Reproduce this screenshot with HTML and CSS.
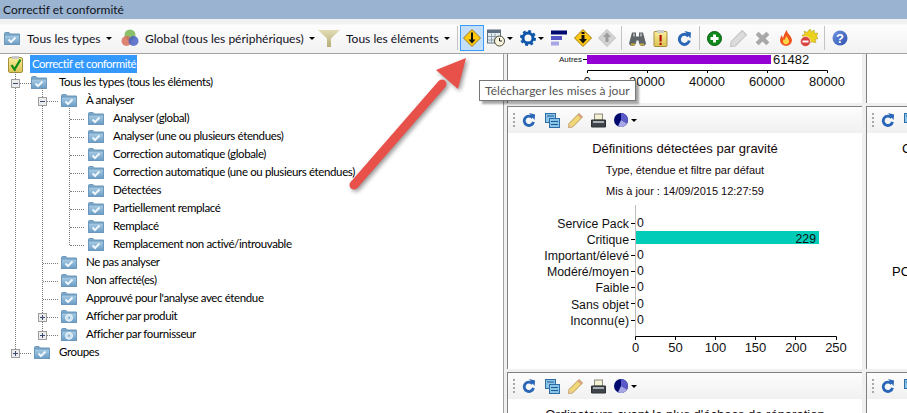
FILE: index.html
```html
<!DOCTYPE html>
<html lang="fr">
<head>
<meta charset="utf-8">
<title>Correctif et conformité</title>
<link rel="stylesheet" href="styles.css">
</head>
<body>
<svg class="defs" width="0" height="0" aria-hidden="true">
  <defs>
    <linearGradient id="gf" x1="0" y1="0" x2="0" y2="1"><stop offset="0" stop-color="#a9cde6"/><stop offset="1" stop-color="#6a9cc4"/></linearGradient>
    <linearGradient id="gb" x1="0" y1="0" x2="1" y2="1"><stop offset="0" stop-color="#6f95e0"/><stop offset="1" stop-color="#2c4fae"/></linearGradient>
    <linearGradient id="gc" x1="0" y1="0" x2="0" y2="1"><stop offset="0" stop-color="#f8ee9c"/><stop offset="1" stop-color="#dcc352"/></linearGradient>
    <linearGradient id="gt" x1="0" y1="0" x2="0" y2="1"><stop offset="0" stop-color="#e2dcb4"/><stop offset="1" stop-color="#b8ad78"/></linearGradient>
    <symbol id="i-folder" viewBox="0 0 16 13">
      <path d="M.5 12.5V1.5q0-1 1-1h3.5l1.500 1.500h8.500q1 0 1 1v9.500z" fill="#7ea9cb" stroke="#6b98bc"/>
      <rect x=".5" y="3" width="15" height="9.500" fill="url(#gf)" stroke="#6b98bc"/>
      <path d="M4.500 7.500l2.500 2.500 4.500-4.500" fill="none" stroke="#eef6fb" stroke-width="2"/>
    </symbol>
    <symbol id="i-folder-disc" viewBox="0 0 16 13">
      <path d="M.5 12.5V1.500q0-1 1-1h3.500l1.500 1.500h8.500q1 0 1 1v9.500z" fill="#7ea9cb" stroke="#6b98bc"/>
      <rect x=".5" y="3" width="15" height="9.500" fill="url(#gf)" stroke="#6b98bc"/>
      <circle cx="8" cy="7.800" r="3.500" fill="#cfe2ef" stroke="#eef6fb"/>
      <circle cx="8" cy="7.800" r="1" fill="#7ea9cb"/>
    </symbol>
    <symbol id="i-root" viewBox="0 0 15 17">
      <rect x=".5" y="1.500" width="14" height="15" rx="1.500" fill="url(#gc)" stroke="#a58f3c"/>
      <rect x="4" y="0" width="7" height="3" fill="#c9c9c9"/>
      <path d="M3.500 9l3 4.500L12.500 3.500" fill="none" stroke="#0a8a12" stroke-width="2.200"/>
    </symbol>
    <symbol id="i-globe" viewBox="0 0 18 18">
      <circle cx="9" cy="6" r="5.500" fill="#8bbf6a"/>
      <circle cx="5.500" cy="12" r="5" fill="#d8705a" fill-opacity=".85"/>
      <circle cx="12.500" cy="12" r="5" fill="#4a62c4" fill-opacity=".85"/>
    </symbol>
    <symbol id="i-funnel" viewBox="0 0 22 17">
      <path d="M0 0h22L13 8.500V17H9V8.500z" fill="url(#gt)"/>
    </symbol>
    <symbol id="i-dl" viewBox="0 0 18 18">
      <path d="M9 .5L17.500 9 9 17.500.5 9z" fill="#ffc812" stroke="#a17b10"/>
      <path d="M8 3.500h2v7h2.500L9 14.500 5.500 10.500H8z" fill="#111"/>
    </symbol>
    <symbol id="i-dl2" viewBox="0 0 18 18">
      <path d="M9 .5L17.500 9 9 17.500.5 9z" fill="#ffc812" stroke="#a17b10"/>
      <path d="M7.500 3h3v2h-3zM7.500 6h3v4h2.500L9 14.500 5 10h2.500z" fill="#111"/>
    </symbol>
    <symbol id="i-ul" viewBox="0 0 18 18">
      <path d="M9 .5L17.500 9 9 17.500.5 9z" fill="#d2d2d2" stroke="#c0c0c0"/>
      <path d="M9 3.500l4 4.500h-2.500v5h-3V8H5z" fill="#9c9c9c"/>
    </symbol>
    <symbol id="i-cal" viewBox="0 0 18 17">
      <rect x=".5" y=".5" width="13" height="13" fill="#e7eef2" stroke="#5e7180"/>
      <rect x=".5" y=".5" width="13" height="3" fill="#5e7180"/>
      <path d="M1 7h12M1 10.500h12M4.500 4v9M8 4v9" stroke="#8ea0ac" fill="none"/>
      <circle cx="12.500" cy="11.500" r="5" fill="#f7f3dd" stroke="#4d4d3c"/>
      <path d="M12.500 8.500v3h2.500" fill="none" stroke="#222"/>
    </symbol>
    <symbol id="i-gear" viewBox="0 0 16 16">
      <circle cx="8" cy="8" r="5" fill="none" stroke="#0f55a8" stroke-width="3"/>
      <circle cx="8" cy="8" r="7" fill="none" stroke="#0f55a8" stroke-width="2" stroke-dasharray="2.900 2.600"/>
    </symbol>
    <symbol id="i-bars" viewBox="0 0 16 15">
      <rect width="16" height="4" fill="#000a6e"/>
      <rect y="5.500" width="11" height="4" fill="#5656c4"/>
      <rect y="11" width="8" height="4" fill="#a6a6e6"/>
    </symbol>
    <symbol id="i-bino" viewBox="0 0 17 16">
      <path d="M3 2h4v4h3V2h4l3 11q-1 3-4 2.500T9.500 10h-2Q7 15 4 15.500T0 13z" fill="#5e6468"/>
      <path d="M2 13h4v2H2zM11 13h4v2h-4z" fill="#c8a83a"/>
      <path d="M4 3h2v3H4zM11 3h2v3h-2z" fill="#a4aaae"/>
    </symbol>
    <symbol id="i-clip" viewBox="0 0 14 17">
      <rect x=".5" y="1.500" width="13" height="15" rx="1" fill="url(#gc)" stroke="#a58f3c"/>
      <rect x="3.500" y="0" width="7" height="3" fill="#cdcdcd"/>
      <path d="M6 5h2.200v6.500H6zM6 12.700h2.200V15H6z" fill="#b3100c"/>
    </symbol>
    <symbol id="i-refresh" viewBox="0 0 14 15">
      <path d="M10.800 5.200A5 5 0 1 0 11.800 9.500" fill="none" stroke="#2a66b8" stroke-width="3"/>
      <path d="M7 0l6.500 1.500L13 7.500z" fill="#2a66b8"/>
    </symbol>
    <symbol id="i-plus" viewBox="0 0 15 15">
      <circle cx="7.500" cy="7.500" r="7" fill="#0d8a1a" stroke="#0a5c12"/>
      <path d="M6 3.500h3V6h2.500v3H9v2.500H6V9H3.500V6H6z" fill="#fff"/>
    </symbol>
    <symbol id="i-pencil" viewBox="0 0 16 16">
      <path d="M11.500.5l4 4L5 15 .5 15.500 1 11z" fill="#dcdcdc" stroke="#c4c4c4"/>
    </symbol>
    <symbol id="i-pencil2" viewBox="0 0 15 15">
      <path d="M11 .5l3.500 3.500L4.500 14 .5 14.500 1 10.500z" fill="#f0d878" stroke="#b89a50"/>
      <path d="M1 10.500l3.500 3.500L.5 14.500z" fill="#e8c8a0"/>
      <path d="M11 .5l3.500 3.500-1.500 1.500-3.500-3.500z" fill="#d8a080"/>
    </symbol>
    <symbol id="i-x" viewBox="0 0 14 14">
      <path d="M2 2l10 10M12 2L2 12" stroke="#a8a8a8" stroke-width="4" fill="none"/>
    </symbol>
    <symbol id="i-flame" viewBox="0 0 13 16">
      <path d="M7 0q1 3 3 5t2.500 5q0 5-6 6-6-1-6-6 0-3 2-5 0 2 1 3 1-4 3.500-8z" fill="#f0541c"/>
      <path d="M7 6q2 3 2.500 5T6.500 14.500Q3.500 14 3.500 11q0-1 1-2 .5 1 1 1 0-2 1.500-4z" fill="#ffd84a"/>
    </symbol>
    <symbol id="i-sun" viewBox="0 0 18 18">
      <path d="M10 0l1.500 3L14 1l.5 3.500L18 4l-1.500 3L18 9.500l-3 1 1 3-4-.5-4 1-4-5-2-3 3-.5L4 2l3 1.500z" fill="#ecd21c" stroke="#a89410" stroke-width=".5"/>
      <circle cx="5.500" cy="12.500" r="5" fill="#d8423c" stroke="#fff" stroke-width=".6"/>
      <rect x="2.500" y="11.500" width="6" height="2" fill="#fff"/>
    </symbol>
    <symbol id="i-stack" viewBox="0 0 15 15">
      <rect x=".5" y=".5" width="10" height="9" fill="#8cc4e8" stroke="#2d6da6"/>
      <rect x="4.500" y="5.500" width="10" height="9" fill="#8cc4e8" stroke="#2d6da6"/>
      <path d="M2 3h7M6 8.500h7M6 11.500h7" stroke="#1d5d96" fill="none"/>
    </symbol>
    <symbol id="i-print" viewBox="0 0 15 14">
      <rect x="3.500" y=".5" width="8" height="6" fill="#f4f0d4" stroke="#8a8a7a"/>
      <path d="M.5 6.500h14v7H.5z" fill="#3e444a" stroke="#2c3034"/>
      <rect x="2" y="7.500" width="11" height="2" fill="#aab0b4"/>
    </symbol>
    <symbol id="i-pie" viewBox="0 0 14 14">
      <circle cx="7" cy="7" r="7" fill="#000a6e"/>
      <path d="M7 7V0a7 7 0 0 1 6 10.500z" fill="#5a5ac8"/>
      <path d="M7 7l6 3.500A7 7 0 0 1 4 13.300z" fill="#a6a6e6"/>
    </symbol>
  </defs>
</svg>

<div class="app">
  <header class="titlebar">Correctif et conformité</header>

  <nav class="toolbar">
    <span class="tool-drop tool-drop-types"><svg class="ic-folder"><use href="#i-folder"/></svg><span class="tool-label">Tous les types</span><i class="caret"></i></span>
    <span class="tool-drop tool-drop-global"><svg class="ic-globe"><use href="#i-globe"/></svg><span class="tool-label">Global (tous les périphériques)</span><i class="caret"></i></span>
    <span class="tool-drop tool-drop-filter"><svg class="ic-funnel"><use href="#i-funnel"/></svg><span class="tool-label">Tous les éléments</span><i class="caret"></i></span>
    <span class="sep"></span>
    <span class="btn btn-active"><svg class="ic18"><use href="#i-dl"/></svg></span>
    <span class="btn btn-menu"><svg class="ic18"><use href="#i-cal"/></svg><i class="caret"></i></span>
    <span class="btn btn-menu"><svg class="ic16"><use href="#i-gear"/></svg><i class="caret"></i></span>
    <span class="btn"><svg class="ic16"><use href="#i-bars"/></svg></span>
    <span class="btn"><svg class="ic18"><use href="#i-dl2"/></svg></span>
    <span class="btn"><svg class="ic18"><use href="#i-ul"/></svg></span>
    <span class="sep"></span>
    <span class="btn"><svg class="ic17"><use href="#i-bino"/></svg></span>
    <span class="btn"><svg class="ic17"><use href="#i-clip"/></svg></span>
    <span class="btn"><svg class="ic15"><use href="#i-refresh"/></svg></span>
    <span class="sep"></span>
    <span class="btn"><svg class="ic15"><use href="#i-plus"/></svg></span>
    <span class="btn"><svg class="ic17"><use href="#i-pencil"/></svg></span>
    <span class="btn"><svg class="ic15"><use href="#i-x"/></svg></span>
    <span class="btn"><svg class="ic16"><use href="#i-flame"/></svg></span>
    <span class="btn"><svg class="ic18"><use href="#i-sun"/></svg></span>
    <span class="sep"></span>
    <span class="btn btn-help"><svg class="ic16" viewBox="0 0 16 16"><circle cx="8" cy="8" r="7.500" fill="url(#gb)"/><text x="8" y="12.500" class="help-mark">?</text></svg></span>
  </nav>

  <main class="main">
    <section class="tree-pane">
      <div class="row row-root"><svg class="ic-root"><use href="#i-root"/></svg><span class="selected">Correctif et conformité</span></div>
      <ul class="tree">
        <li>
          <span class="exp exp-minus"></span>
          <div class="row row-first"><svg class="ic-tree"><use href="#i-folder"/></svg>Tous les types (tous les éléments)</div>
          <ul>
            <li>
              <span class="exp exp-minus"></span>
              <div class="row"><svg class="ic-tree"><use href="#i-folder"/></svg>À analyser</div>
              <ul>
                <li><div class="row"><svg class="ic-tree"><use href="#i-folder"/></svg>Analyser (global)</div></li>
                <li><div class="row"><svg class="ic-tree"><use href="#i-folder"/></svg>Analyser (une ou plusieurs étendues)</div></li>
                <li><div class="row"><svg class="ic-tree"><use href="#i-folder"/></svg>Correction automatique (globale)</div></li>
                <li><div class="row"><svg class="ic-tree"><use href="#i-folder"/></svg>Correction automatique (une ou plusieurs étendues)</div></li>
                <li><div class="row"><svg class="ic-tree"><use href="#i-folder"/></svg>Détectées</div></li>
                <li><div class="row"><svg class="ic-tree"><use href="#i-folder"/></svg>Partiellement remplacé</div></li>
                <li><div class="row"><svg class="ic-tree"><use href="#i-folder"/></svg>Remplacé</div></li>
                <li><div class="row"><svg class="ic-tree"><use href="#i-folder"/></svg>Remplacement non activé/introuvable</div></li>
              </ul>
            </li>
            <li><div class="row"><svg class="ic-tree"><use href="#i-folder"/></svg>Ne pas analyser</div></li>
            <li><div class="row"><svg class="ic-tree"><use href="#i-folder"/></svg>Non affecté(es)</div></li>
            <li><div class="row"><svg class="ic-tree"><use href="#i-folder"/></svg>Approuvé pour l'analyse avec étendue</div></li>
            <li><span class="exp exp-plus"></span><div class="row"><svg class="ic-tree"><use href="#i-folder-disc"/></svg>Afficher par produit</div></li>
            <li><span class="exp exp-plus"></span><div class="row"><svg class="ic-tree"><use href="#i-folder-disc"/></svg>Afficher par fournisseur</div></li>
          </ul>
        </li>
        <li><span class="exp exp-plus"></span><div class="row"><svg class="ic-tree"><use href="#i-folder"/></svg>Groupes</div></li>
      </ul>
    </section>

    <div class="splitter"></div>

    <section class="charts">
      <article class="card card-top">
        <svg class="plot plot-top" viewBox="509 54 354 49">
          <text x="582" y="62" class="t-tiny" text-anchor="end">Autres</text>
          <path class="axis" d="M583 59.500h4"/>
          <rect x="587" y="55" width="184" height="9" fill="#9400d3"/>
          <text x="773" y="64" class="t-axis">61482</text>
          <path class="axis" d="M587.500 73V70.500H827.500V73M647.500 70.500V73M707.500 70.500V73M767.500 70.500V73"/>
          <text x="587" y="86" class="t-axis" text-anchor="middle">0</text>
          <text x="647" y="86" class="t-axis" text-anchor="middle">20000</text>
          <text x="707" y="86" class="t-axis" text-anchor="middle">40000</text>
          <text x="767" y="86" class="t-axis" text-anchor="middle">60000</text>
          <text x="827" y="86" class="t-axis" text-anchor="middle">80000</text>
        </svg>
      </article>
      <article class="card card-top"></article>

      <article class="card">
        <div class="card-bar">
          <i class="grip"></i>
          <svg class="ic14"><use href="#i-refresh"/></svg>
          <svg class="ic15c"><use href="#i-stack"/></svg>
          <svg class="ic15c"><use href="#i-pencil2"/></svg>
          <svg class="ic15c"><use href="#i-print"/></svg>
          <svg class="ic14"><use href="#i-pie"/></svg>
          <i class="caret caret-pie"></i>
        </div>
        <div class="chart-head">
          <h2 class="chart-title">Définitions détectées par gravité</h2>
          <p class="chart-sub">Type, étendue et filtre par défaut</p>
          <p class="chart-sub">Mis à jour : 14/09/2015 12:27:59</p>
        </div>
        <svg class="plot plot-main" viewBox="509 205 354 150">
          <path class="axis-soft" d="M635.500 205V337"/>
          <path class="axis" d="M631 223.500h4M631 239.500h4M631 255.500h4M631 271.500h4M631 287.500h4M631 303.500h4M631 320.500h4"/>
          <g class="t-cat" text-anchor="end">
            <text x="629" y="228">Service Pack</text>
            <text x="629" y="244">Critique</text>
            <text x="629" y="260">Important/élevé</text>
            <text x="629" y="276">Modéré/moyen</text>
            <text x="629" y="292">Faible</text>
            <text x="629" y="308.500">Sans objet</text>
            <text x="629" y="325">Inconnu(e)</text>
          </g>
          <rect x="636" y="231" width="183" height="13" fill="#00ccb8"/>
          <text x="816" y="243" class="t-cat" text-anchor="end">229</text>
          <g class="t-cat">
            <text x="637" y="227">0</text>
            <text x="637" y="259">0</text>
            <text x="637" y="275">0</text>
            <text x="637" y="291">0</text>
            <text x="637" y="308">0</text>
            <text x="637" y="324">0</text>
          </g>
          <path class="axis" d="M635.500 340V336.500H836.500V340M675.500 336.500V340M715.500 336.500V340M755.500 336.500V340M795.500 336.500V340"/>
          <g class="t-axis" text-anchor="middle">
            <text x="635.500" y="352">0</text>
            <text x="675.500" y="352">50</text>
            <text x="715.500" y="352">100</text>
            <text x="755.500" y="352">150</text>
            <text x="796" y="352">200</text>
            <text x="836" y="352">250</text>
          </g>
        </svg>
      </article>

      <article class="card">
        <div class="card-bar">
          <i class="grip"></i>
          <svg class="ic14"><use href="#i-refresh"/></svg>
          <svg class="ic15c"><use href="#i-stack"/></svg>
        </div>
        <div class="side-text">
          <p class="side-c">C</p>
          <p class="side-pc">PC</p>
        </div>
      </article>

      <article class="card">
        <div class="card-bar">
          <i class="grip"></i>
          <svg class="ic14"><use href="#i-refresh"/></svg>
          <svg class="ic15c"><use href="#i-stack"/></svg>
          <svg class="ic15c"><use href="#i-pencil2"/></svg>
          <svg class="ic15c"><use href="#i-print"/></svg>
          <svg class="ic14"><use href="#i-pie"/></svg>
          <i class="caret caret-pie"></i>
        </div>
        <div class="chart-head">
          <h2 class="chart-title">Ordinateurs ayant le plus d'échecs de réparation</h2>
        </div>
      </article>

      <article class="card">
        <div class="card-bar">
          <i class="grip"></i>
          <svg class="ic14"><use href="#i-refresh"/></svg>
          <svg class="ic15c"><use href="#i-stack"/></svg>
        </div>
      </article>
    </section>
  </main>

  <div class="tooltip">Télécharger les mises à jour</div>

  <svg class="callout" viewBox="0 0 140 150" aria-hidden="true">
    <path class="callout-shaft" d="M17 135L105 34"/>
    <path class="callout-head" d="M129 8L99 20L121 39z"/>
  </svg>
</div>
</body>
</html>
```
FILE: styles.css
```css
* { box-sizing: border-box; }
html, body { margin: 0; padding: 0; overflow: hidden; background: #fff; }
body { font-family: Lato, "Open Sans", sans-serif; font-size: 11.5px; letter-spacing: -.38px; color: #000; }
.defs { position: absolute; }
ul { list-style: none; margin: 0; padding: 0; }
h2, p { margin: 0; font-weight: 400; }
svg { display: block; flex: none; }

.app { position: relative; display: flex; flex-direction: column; width: 907px; height: 413px; overflow: hidden; }

.titlebar { height: 19px; flex: none; padding: 0 0 1px 3px; display: flex; align-items: center; background: #9ab3d0; color: #10141c; font-size: 12px; letter-spacing: 0; }

.toolbar { height: 34px; flex: none; display: flex; align-items: center; padding-top: 4px; background: linear-gradient(#f1f1f1 0, #f1f1f1 5px, #fdfdfd 6px, #f2f2f2 100%); font-size: 12px; letter-spacing: 0; }
.tool-drop { display: flex; align-items: center; flex: none; }
.tool-label { color: #10101c; white-space: nowrap; }
.tool-drop-types { width: 118px; padding-left: 4px; }
.tool-drop-types .tool-label { margin-left: 7px; }
.tool-drop-global { width: 200px; padding-left: 3px; }
.tool-drop-global .tool-label { margin-left: 6px; }
.tool-drop-filter { width: 139px; }
.tool-drop-filter .tool-label { margin-left: 6px; }
.caret { display: block; flex: none; width: 0; height: 0; border: 3px solid transparent; border-top-color: #000; border-bottom: 0; margin-left: 5px; }
.ic-folder { width: 16px; height: 13px; }
.ic-globe { width: 18px; height: 18px; }
.ic-funnel { width: 22px; height: 17px; }
.sep { flex: none; width: 7px; height: 24px; background: linear-gradient(#c4c4c4, #c4c4c4) no-repeat 3px 0 / 1px 100%; }
.tool-drop-filter + .sep { width: 3px; background-position: 0 0; }
.btn { flex: none; width: 23.6px; height: 26px; display: flex; align-items: center; justify-content: center; }
.btn-menu { width: 32px; }
.btn-menu .caret { margin-left: 2px; margin-right: 1px; }
.btn-menu svg { margin-left: 1px; }
.btn-active { background: #c4dffa; border: 1px solid #3a9bfb; }
.ic18 { width: 18px; height: 18px; }
.ic17 { width: 17px; height: 17px; }
.ic16 { width: 16px; height: 16px; }
.ic15 { width: 15px; height: 15px; }
.help-mark { font: 700 13px "Liberation Sans", sans-serif; fill: #fff; text-anchor: middle; }

.main { flex: 1; min-height: 0; display: flex; border-top: 1px solid #a3a3a3; }
.tree-pane { width: 503px; flex: none; background: #fff; padding-top: 1px; overflow: hidden; }
.splitter { width: 4px; flex: none; background: #f0f0f0; border-left: 1px solid #a0a0a0; }

.row { height: 18px; display: flex; align-items: center; white-space: nowrap; padding-left: 19px; padding-bottom: 1px; }
.ic-tree { width: 16px; height: 13px; margin-right: 9px; margin-top: 2px; }
.row-first .ic-tree { margin-left: -3px; margin-right: 12px; }
.row-root { padding-left: 8px; padding-bottom: 0; }
.ic-root { width: 15px; height: 17px; margin-right: 7px; }
.selected { background: #3399ff; color: #fff; height: 18px; line-height: 17px; padding: 0 2px; width: 107px; letter-spacing: -.5px; }

.tree { margin-left: 15px; }
.tree li { position: relative; }
.tree ul { margin-left: 27px; }
.tree li::before { content: ""; position: absolute; left: 0; top: -3px; bottom: 0; border-left: 1px dotted #7a7a7a; }
.tree li:last-child::before { bottom: auto; height: 13px; }
.tree li::after { content: ""; position: absolute; left: 1px; top: 10px; width: 15px; border-top: 1px dotted #7a7a7a; }
.tree ul ul li::after { width: 14px; }
.exp { position: absolute; z-index: 1; left: -4px; top: 6px; width: 9px; height: 9px; border: 1px solid #9c9c9c; background: #f2f2f2; }
.exp-minus { background: linear-gradient(#3a4a70, #3a4a70) no-repeat center / 5px 1px, #ececec; }
.exp-plus { background: linear-gradient(#3a4a70, #3a4a70) no-repeat center / 5px 1px, linear-gradient(#3a4a70, #3a4a70) no-repeat center / 1px 5px, #ececec; }

.charts { flex: 1; min-width: 0; display: grid; grid-template-columns: 355px 355px; grid-template-rows: 49px 263px 60px; gap: 3px 4px; background: #f0f0f0; overflow: hidden; letter-spacing: 0; }
.card { background: #fff; border-left: 1px solid #808080; border-top: 1px solid #808080; overflow: hidden; }
.card-top { border-top: 0; }
.card-bar { height: 26px; display: flex; align-items: center; padding-left: 5px; background: linear-gradient(#fdfdfd, #f0f0f0); }
.grip { display: block; width: 2px; height: 14px; margin-right: 7px; background: repeating-linear-gradient(#a8a8a8 0 2px, transparent 2px 4px); }
.ic14 { width: 14px; height: 14px; margin-right: 9px; }
.ic15c { width: 15px; height: 15px; margin-right: 8px; }
.caret-pie { margin-left: -6px; }

.chart-head { text-align: center; font-family: "Liberation Sans", Arial, sans-serif; padding-top: 7px; white-space: nowrap; }
.chart-title { font-size: 13px; line-height: 18px; color: #14080c; }
.chart-sub { font-size: 11px; line-height: 20px; margin-top: 2px; color: #14080c; }
.chart-sub + .chart-sub { margin-top: 1px; }
.plot { font-family: "Liberation Sans", Arial, sans-serif; }
.plot-top { width: 354px; height: 49px; margin-left: 1px; }
.plot-main { width: 354px; height: 150px; margin-top: 4px; margin-left: 1px; }
.t-axis { font-size: 13px; fill: #111; }
.t-cat { font-size: 12.3px; fill: #111; }
.t-tiny { font-size: 8px; fill: #111; }
.axis { fill: none; stroke: #000; stroke-width: 1; }
.axis-soft { fill: none; stroke: #bdbdbd; stroke-width: 1; }

.side-text { font-family: "Liberation Sans", Arial, sans-serif; font-size: 13px; white-space: nowrap; }
.side-c { padding: 7px 0 0 35px; line-height: 18px; }
.side-pc { padding: 105px 0 0 25px; line-height: 18px; }

.tooltip { position: absolute; left: 479px; top: 80px; width: 157px; height: 21px; padding-left: 5px; display: flex; align-items: center; background: #fff; border: 1px solid #767676; color: #555; font-size: 12px; letter-spacing: .05px; box-shadow: 3px 3px 2px rgba(0,0,0,.35); white-space: nowrap; }

.callout { position: absolute; left: 337px; top: 50px; width: 140px; height: 150px; filter: drop-shadow(2px 2px 2px rgba(0,0,0,.4)); }
.callout-shaft { fill: none; stroke: #e8504a; stroke-width: 9; stroke-linecap: round; }
.callout-head { fill: #e8504a; }
```
